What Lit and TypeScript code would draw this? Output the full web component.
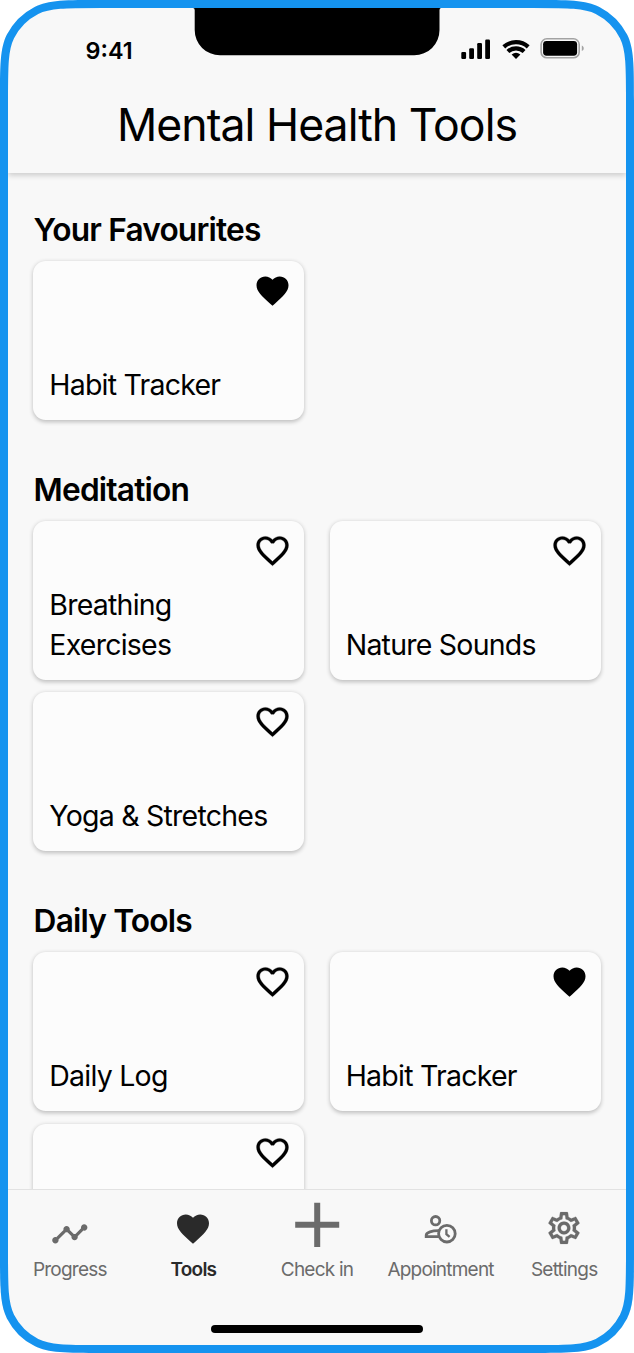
import { LitElement, html, css, svg } from "lit";
import { customElement, property } from "lit/decorators.js";

const HEART =
  "M12 21.35l-1.45-1.32C5.4 15.36 2 12.28 2 8.5 2 5.42 4.42 3 7.5 3c1.74 0 3.41.81 4.5 2.09C13.09 3.81 14.76 3 16.5 3 19.58 3 22 5.42 22 8.5c0 3.78-3.4 6.86-8.55 11.54L12 21.35z";
const HEART_OUTLINE =
  "M16.5 3c-1.74 0-3.41.81-4.5 2.09C10.91 3.81 9.24 3 7.5 3 4.42 3 2 5.42 2 8.5c0 3.78 3.4 6.86 8.55 11.54L12 21.35l1.45-1.32C18.6 15.36 22 12.28 22 8.5 22 5.42 19.58 3 16.5 3zm-4.4 15.55l-.1.1-.1-.1C7.14 14.24 4 11.39 4 8.5 4 6.5 5.5 5 7.5 5c1.54 0 3.04.99 3.57 2.36h1.87C13.46 5.99 14.96 5 16.5 5c2 0 3.5 1.5 3.5 3.5 0 2.89-3.14 5.74-7.9 10.05z";
const TIMELINE =
  "M23 8c0 1.1-.9 2-2 2-.18 0-.35-.02-.51-.07l-3.56 3.55c.05.16.07.34.07.52 0 1.1-.9 2-2 2s-2-.9-2-2c0-.18.02-.36.07-.52l-2.55-2.55c-.16.05-.34.07-.52.07s-.36-.02-.52-.07l-4.55 4.56c.05.16.07.33.07.51 0 1.1-.9 2-2 2s-2-.9-2-2 .9-2 2-2c.18 0 .35.02.51.07l4.56-4.55C8.02 9.36 8 9.18 8 9c0-1.1.9-2 2-2s2 .9 2 2c0 .18-.02.36-.07.52l2.55 2.55c.16-.05.34-.07.52-.07s.36.02.52.07l3.55-3.56C19.02 8.35 19 8.18 19 8c0-1.1.9-2 2-2s2 .9 2 2z";
const GEAR =
  "M19.43 12.98c.04-.32.07-.64.07-.98 0-.34-.03-.66-.07-.98l2.11-1.65c.19-.15.24-.42.12-.64l-2-3.46c-.09-.16-.26-.25-.44-.25-.06 0-.12.01-.17.03l-2.49 1c-.52-.4-1.08-.73-1.69-.98l-.38-2.65C14.46 2.18 14.25 2 14 2h-4c-.25 0-.46.18-.49.42l-.38 2.65c-.61.25-1.17.59-1.69.98l-2.49-1c-.06-.02-.12-.03-.18-.03-.17 0-.34.09-.43.25l-2 3.46c-.13.22-.07.49.12.64l2.11 1.65c-.04.32-.07.65-.07.98 0 .33.03.66.07.98l-2.11 1.65c-.19.15-.24.42-.12.64l2 3.46c.09.16.26.25.44.25.06 0 .12-.01.17-.03l2.49-1c.52.4 1.08.73 1.69.98l.38 2.65c.03.24.24.42.49.42h4c.25 0 .46-.18.49-.42l.38-2.65c.61-.25 1.17-.59 1.69-.98l2.49 1c.06.02.12.03.18.03.17 0 .34-.09.43-.25l2-3.46c.12-.22.07-.49-.12-.64l-2.11-1.65zm-1.98-1.71c.04.31.05.52.05.73 0 .21-.02.43-.05.73l-.14 1.13.89.7 1.08.84-.7 1.21-1.27-.51-1.04-.42-.9.68c-.43.32-.84.56-1.25.73l-1.06.43-.16 1.13-.2 1.35h-1.4l-.19-1.35-.16-1.13-1.06-.43c-.43-.18-.83-.41-1.23-.71l-.91-.7-1.06.43-1.27.51-.7-1.21 1.08-.84.89-.7-.14-1.13c-.03-.31-.05-.54-.05-.74s.02-.43.05-.73l.14-1.13-.89-.7-1.08-.84.7-1.21 1.27.51 1.04.42.9-.68c.43-.32.84-.56 1.25-.73l1.06-.43.16-1.13.2-1.35h1.39l.19 1.35.16 1.13 1.06.43c.43.18.83.41 1.23.71l.91.7 1.06-.43 1.27-.51.7 1.21-1.07.85-.89.7.14 1.13zM12 8c-2.21 0-4 1.79-4 4s1.79 4 4 4 4-1.79 4-4-1.79-4-4-4zm0 6c-1.1 0-2-.9-2-2s.9-2 2-2 2 .9 2 2-.9 2-2 2z";

/** Rounded rectangle whose corners ease into the straight edges. */
function smoothRect(w: number, h: number, r: number): string {
  const s = 0.6;
  const rad = Math.PI / 180;
  const p = (1 + s) * r;
  const arc = Math.sin(45 * (1 - s) * rad) * r * Math.SQRT2;
  const c = r * Math.tan(22.5 * s * rad) * Math.cos(45 * s * rad);
  const d = c * Math.tan(45 * s * rad);
  const b = (p - arc - c - d) / 3;
  const a = 2 * b;
  const l = a + b + c;
  return [
    `M${w - p} 0c${a} 0 ${a + b} 0 ${l} ${d}a${r} ${r} 0 0 1 ${arc} ${arc}c${d} ${c} ${d} ${b + c} ${d} ${l}`,
    `V${h - p}c0 ${a} 0 ${a + b} ${-d} ${l}a${r} ${r} 0 0 1 ${-arc} ${arc}c${-c} ${d} ${-(b + c)} ${d} ${-l} ${d}`,
    `H${p}c${-a} 0 ${-(a + b)} 0 ${-l} ${-d}a${r} ${r} 0 0 1 ${-arc} ${-arc}c${-d} ${-c} ${-d} ${-(b + c)} ${-d} ${-l}`,
    `V${p}c0 ${-a} 0 ${-(a + b)} ${d} ${-l}a${r} ${r} 0 0 1 ${arc} ${-arc}c${c} ${-d} ${b + c} ${-d} ${l} ${-d}Z`,
  ].join("");
}

const OUTLINE = smoothRect(634, 1353, 63.4);

interface Tool {
  name: string;
  favourite?: boolean;
}

const SECTIONS: { title: string; tools: Tool[] }[] = [
  { title: "Your Favourites", tools: [{ name: "Habit Tracker", favourite: true }] },
  {
    title: "Meditation",
    tools: [{ name: "Breathing Exercises" }, { name: "Nature Sounds" }, { name: "Yoga & Stretches" }],
  },
  {
    title: "Daily Tools",
    tools: [{ name: "Daily Log" }, { name: "Habit Tracker", favourite: true }, { name: "" }],
  },
];

@customElement("tool-card")
class ToolCard extends LitElement {
  @property() name = "";
  @property({ type: Boolean }) favourite = false;

  static styles = css`
    :host {
      display: flex;
      flex-direction: column;
      justify-content: space-between;
      box-sizing: border-box;
      height: 158.6px;
      padding: 10.5px 12.7px 15.4px 16px;
      border-radius: 12.7px;
      background: #fcfcfc;
      box-shadow: 0 1.6px 4px rgba(0, 0, 0, 0.24);
    }
    .heart {
      align-self: flex-end;
      width: 38.4px;
      height: 38.4px;
      flex: none;
    }
    .outlined {
      stroke: #000;
      stroke-width: 0.15px;
    }
    .name {
      width: 225px;
      font-size: 28.5px;
      line-height: 39.8px;
      letter-spacing: -0.77px;
    }
  `;

  render() {
    return html`
      <svg class="heart" viewBox="-0.2 0.25 24 24">
        ${this.favourite ? svg`<path d=${HEART} />` : svg`<path class="outlined" d=${HEART_OUTLINE} />`}
      </svg>
      <div class="name">${this.name}</div>
    `;
  }
}

const TABS = [
  { label: "Progress", icon: svg`<path fill="currentColor" transform="translate(4.6 13.7) scale(1.6)" d=${TIMELINE} />` },
  { label: "Tools", active: true, icon: svg`<path fill="currentColor" transform="translate(4.8 8.7) scale(1.6)" d=${HEART} />` },
  { label: "Check in", icon: svg`<path fill="currentColor" d="M21.2 1.8h6v19h19v6h-19v19.300h-6v-19.300h-19v-6h19z" />` },
  {
    label: "Appointment",
    icon: svg`<g fill="none" stroke="currentColor" stroke-width="2.8" transform="translate(-0.5 -0.3)">
      <circle cx="19.100" cy="20" r="4.200" />
      <circle cx="30.400" cy="33" r="8.300" />
      <path stroke-width="2.300" d="M29.900 28.500v4.900l3.200 2.700" />
      <path d="M22.900 30C15.400 29.800 9.700 31.800 9.700 34.500V36H22.400" />
    </g>`,
  },
  { label: "Settings", icon: svg`<path fill="currentColor" stroke="currentColor" stroke-width="0.1" transform="translate(4.8 7.8) scale(1.6)" d=${GEAR} />` },
];

@customElement("app-root")
class AppRoot extends LitElement {
  static styles = css`
    :host {
      display: block;
      font-family: Inter, "Liberation Sans", sans-serif;
      color: #000;
    }
    .phone {
      position: relative;
      box-sizing: border-box;
      width: 634px;
      height: 1353px;
      padding: 8px;
      display: flex;
      flex-direction: column;
      overflow: hidden;
      background: #f8f8f8;
    }
    .frame {
      position: absolute;
      inset: 0;
      z-index: 5;
      pointer-events: none;
    }
    .notch {
      position: absolute;
      left: 190px;
      top: 8px;
      z-index: 4;
    }
    header {
      position: relative;
      z-index: 1;
      flex: none;
      height: 164.5px;
      background: #f8f8f8;
      box-shadow: 0 2px 6px rgba(0, 0, 0, 0.2);
    }
    .status {
      display: flex;
      justify-content: space-between;
      align-items: center;
      height: 82px;
      padding: 0 40px 0 77.5px;
    }
    .time {
      padding-top: 2px;
      font-size: 23.4px;
      font-weight: 600;
      letter-spacing: 0;
    }
    h1 {
      margin: 0;
      font-size: 44.6px;
      line-height: 71px;
      font-weight: 400;
      text-align: center;
      letter-spacing: -0.97px;
    }
    main {
      flex: 1;
      min-height: 0;
      overflow: hidden;
      padding: 38px 25.300px 0;
      display: flex;
      flex-direction: column;
      gap: 50.700px;
    }
    section {
      flex: none;
    }
    h2 {
      margin: 0 0 12.300px;
      padding: 0.400px 0 0 0.300px;
      font-size: 31.700px;
      line-height: 38px;
      font-weight: 600;
      letter-spacing: -0.83px;
    }
    .grid {
      display: grid;
      grid-template-columns: 1fr 1fr;
      gap: 12.700px 25.400px;
    }
    nav {
      flex: none;
      box-sizing: border-box;
      height: 156px;
      border-top: 1px solid #e2e2e2;
      background: #f8f8f8;
      display: flex;
      flex-direction: column;
      align-items: center;
    }
    .tabs {
      display: grid;
      grid-template-columns: repeat(5, 1fr);
      width: 100%;
      padding-top: 10.700px;
    }
    .tab {
      display: flex;
      flex-direction: column;
      align-items: center;
      color: #6b6b6b;
      font-size: 19px;
      line-height: 24px;
      letter-spacing: -0.78px;
      white-space: nowrap;
    }
    .tab svg {
      width: 48px;
      height: 48px;
      margin-bottom: 9.700px;
    }
    .tab.active {
      color: #2a2a2a;
      font-weight: 600;
    }
    .home {
      width: 212px;
      height: 8px;
      margin-top: 42.300px;
      border-radius: 4px;
      background: #000;
    }
  `;

  render() {
    return html`
      <div class="phone">
        <header>
          <div class="status">
            <span class="time">9:41</span>
            <svg width="125" height="24" viewBox="0 0.4 125 24">
              <rect x="0.3" y="15.300" width="4.800" height="7" rx="1.200" />
              <rect x="8.200" y="11.700" width="4.800" height="10.600" rx="1.200" />
              <rect x="16.200" y="6.500" width="4.800" height="15.800" rx="1.200" />
              <rect x="24.200" y="3" width="4.800" height="19.300" rx="1.200" />
              <g fill="none" stroke="#000">
                <path stroke-width="4.200" d="M42.800 10.300A18 18 0 0 1 67.200 10.300" />
                <path stroke-width="4.200" d="M46.900 14.900A12.100 12.100 0 0 1 63.100 14.900" />
              </g>
              <path d="M50.600 18A7 7 0 0 1 59.400 18L55 22.400Z" />
              <rect x="80.100" y="2.200" width="38.100" height="19" rx="5.800" fill="none" stroke="#a3a3a3" stroke-width="1.600" />
              <rect x="82.100" y="4.300" width="34" height="14.800" rx="3.400" />
              <path fill="#a3a3a3" d="M120.800 8.900c2.600 1 2.600 4.600 0 5.600z" />
            </svg>
          </div>
          <h1>Mental Health Tools</h1>
        </header>
        <main>
          ${SECTIONS.map(
            (s) => html`
              <section>
                <h2>${s.title}</h2>
                <div class="grid">
                  ${s.tools.map((t) => html`<tool-card .name=${t.name} .favourite=${!!t.favourite}></tool-card>`)}
                </div>
              </section>
            `,
          )}
        </main>
        <nav>
          <div class="tabs">
            ${TABS.map(
              (t) => html`
                <div class="tab ${t.active ? "active" : ""}">
                  <svg viewBox="0 0 48 48">${t.icon}</svg>
                  <span>${t.label}</span>
                </div>
              `,
            )}
          </div>
          <div class="home"></div>
        </nav>
        <svg class="notch" width="254" height="48" viewBox="0 0 254 48">
          <path d="M3 0Q4.700 0 4.700 2V22A25.300 25.300 0 0 0 30 47.300H224.200A25.300 25.300 0 0 0 249.500 22V2Q249.500 0 251.200 0Z" />
        </svg>
        <svg class="frame" width="634" height="1353" viewBox="0 0 634 1353">
          <defs><clipPath id="body"><path d=${OUTLINE} /></clipPath></defs>
          <path fill="#fff" fill-rule="evenodd" d="M-1-1H635V1354H-1Z${OUTLINE}" />
          <path fill="none" stroke="#1593ef" stroke-width="16" clip-path="url(#body)" d=${OUTLINE} />
        </svg>
      </div>
    `;
  }
}
